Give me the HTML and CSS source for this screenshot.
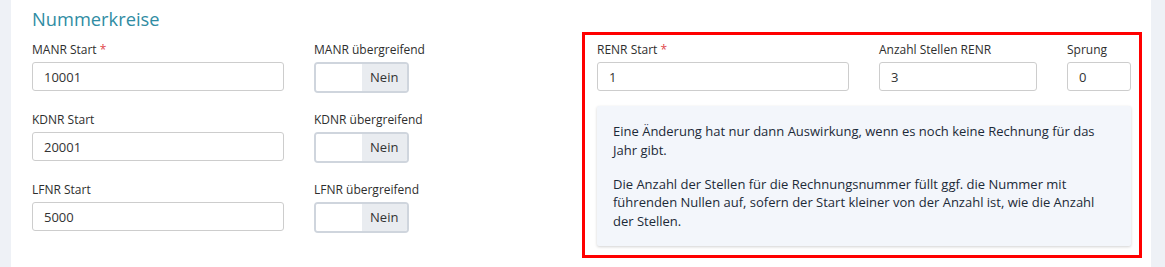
FILE: index.html
```html
<html>
<head>
  <title>Nummerkreise</title>
  <link rel="stylesheet" href="styles.css">
</head>
<body>

  <div class="card">
    <h2 class="section-title">Nummerkreise</h2>

    <div class="section-row">
      <div class="left-grid">
        <div class="field">
          <label>MANR Start <span class="req">*</span></label>
          <input class="text-input" type="text" value="10001">
        </div>
        <div class="field">
          <label>MANR übergreifend</label>
          <div class="toggle"><span class="toggle-off"></span><span class="toggle-on">Nein</span></div>
        </div>

        <div class="field">
          <label>KDNR Start</label>
          <input class="text-input" type="text" value="20001">
        </div>
        <div class="field">
          <label>KDNR übergreifend</label>
          <div class="toggle"><span class="toggle-off"></span><span class="toggle-on">Nein</span></div>
        </div>

        <div class="field">
          <label>LFNR Start</label>
          <input class="text-input" type="text" value="5000">
        </div>
        <div class="field">
          <label>LFNR übergreifend</label>
          <div class="toggle"><span class="toggle-off"></span><span class="toggle-on">Nein</span></div>
        </div>
      </div>

      <div class="highlight">
        <div class="right-grid">
          <div class="field">
            <label>RENR Start <span class="req">*</span></label>
            <input class="text-input" type="text" value="1">
          </div>
          <div class="field">
            <label>Anzahl Stellen RENR</label>
            <input class="text-input" type="text" value="3">
          </div>
          <div class="field">
            <label>Sprung</label>
            <input class="text-input" type="text" value="0">
          </div>
        </div>

        <div class="info">
          <p>Eine Änderung hat nur dann Auswirkung, wenn es noch keine Rechnung für das Jahr gibt.</p>
          <p>Die Anzahl der Stellen für die Rechnungsnummer füllt ggf. die Nummer mit führenden Nullen auf, sofern der Start kleiner von der Anzahl ist, wie die Anzahl der Stellen.</p>
        </div>
      </div>
    </div>
  </div>

</body>
</html>
```

FILE: styles.css
```css
body {
  margin: 0;
  background: #eef1f6;
  font-family: "Open Sans", "Liberation Sans", sans-serif;
  color: #333;
}

.card {
  margin: 0 14px 0 11px;
  height: 267px;
  box-sizing: border-box;
  background: #fff;
  padding: 7px 0 0 21px;
}

.section-title {
  margin: 0 0 7px 0;
  font-size: 18.3px;
  line-height: 24px;
  font-weight: 400;
  color: #2f8ca3;
}

.section-row {
  display: flex;
  margin-top: -6px;
}

.left-grid {
  width: 550px;
  padding-top: 6px;
  display: grid;
  grid-template-columns: 252px 95px;
  column-gap: 30px;
  row-gap: 15px;
  align-content: start;
  align-items: start;
}

.field label {
  display: block;
  font-size: 12px;
  line-height: 17px;
  margin: 3px 0 4px 0;
  white-space: nowrap;
  color: #2e2e2e;
}

.req { color: #e0464b; }

.text-input {
  display: block;
  width: 100%;
  height: 29px;
  box-sizing: border-box;
  border: 1px solid #cdcdcd;
  border-radius: 3px;
  padding: 0 11px;
  font-family: "Open Sans", "Liberation Sans", sans-serif;
  font-size: 13px;
  color: #333;
  outline: none;
}

.toggle {
  display: flex;
  width: 95px;
  height: 31px;
  box-sizing: border-box;
  border: 2px solid #cfd5dd;
  border-radius: 4px;
  overflow: hidden;
}

.toggle-off {
  flex: 1;
  background: #fff;
}

.toggle-on {
  flex: 1;
  background: #e9ecf0;
  font-size: 13px;
  line-height: 27px;
  text-align: center;
  color: #333;
}

.highlight {
  width: 560px;
  box-sizing: border-box;
  border: 3px solid #f00;
  padding: 3px 8px 9px 12px;
}

.right-grid {
  display: grid;
  grid-template-columns: 252px 158px 64px;
  column-gap: 30px;
  margin-bottom: 15px;
}

.info {
  background: #f3f6fb;
  box-shadow: 0 1px 3px rgba(0, 0, 0, 0.18);
  border-radius: 2px;
  padding: 16px;
  font-size: 13px;
  line-height: 18.5px;
  color: #1c2a38;
}

.info p { margin: 0; }
.info p + p { margin-top: 15.5px; }
```
